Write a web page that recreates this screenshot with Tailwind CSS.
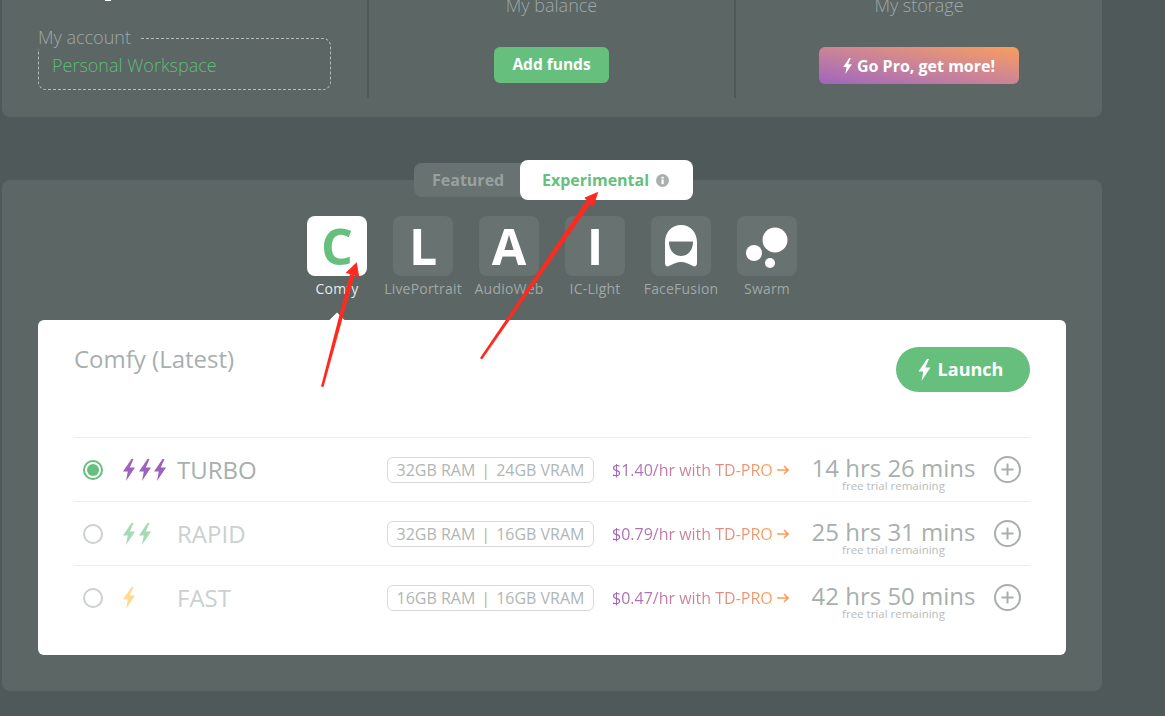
<!DOCTYPE html>
<html>
<head>
<meta charset="utf-8">
<script src="https://cdn.jsdelivr.net/npm/@tailwindcss/browser@4"></script>
</head>
<body class="bg-[#505959]">
<div class="relative w-[1165px] h-[716px] overflow-hidden bg-[#505959] font-['Open_Sans',sans-serif]">

  <!-- Account panel -->
  <section class="ml-[2px] w-[1100px] h-[117px] bg-[#5b6665] rounded-b-lg flex items-start">
    <div class="relative w-[367px] h-[98px] border-r-2 border-[#4f5958]">
      <div class="absolute left-[103px] top-0 w-[6px] h-[1px] bg-white"></div>
      <div class="absolute left-[36px] top-[38px] w-[293px] h-[52px] rounded-lg border border-dashed border-[#b4bbb9] pl-[13px] pt-[3px] flex items-center text-[18px] font-light text-[#5fbc78]">Personal Workspace</div>
      <div class="absolute left-[36px] top-[25px] w-[103px] h-[24px] bg-[#5b6665] text-[18px] leading-[24px] font-light text-[#a0a8a6] whitespace-nowrap">My account</div>
    </div>
    <div class="w-[367px] h-[98px] border-r-2 border-[#4f5958] flex flex-col items-center">
      <div class="mt-[-7px] h-[24px] text-[18px] leading-[24px] font-light text-[#a0a8a6]">My balance</div>
      <button class="mt-[30px] w-[115px] h-[36px] rounded-md bg-[#66bf7c] text-white text-[15.5px] font-bold">Add funds</button>
    </div>
    <div class="flex-1 h-[98px] flex flex-col items-center">
      <div class="mt-[-7px] h-[24px] text-[18px] leading-[24px] font-light text-[#a0a8a6]">My storage</div>
      <button class="mt-[30px] w-[200px] h-[37px] rounded-md bg-linear-to-tr from-[#a064bd] to-[#fb9d58] text-white text-[16px] font-bold flex items-center justify-center gap-[5px]">
        <svg width="9" height="16" viewBox="0 0 12 22" fill="currentColor"><path d="M8.5 0 0 12.5h4.8L3 22l9-13.5H6.8L10.5 0z"/></svg>
        <span>Go Pro, get more!</span>
      </button>
    </div>
  </section>

  <!-- Apps panel -->
  <section class="mt-[63px] ml-[2px] w-[1100px] h-[511px] bg-[#5b6665] rounded-lg">
    <!-- Tabs -->
    <div class="flex items-center ml-[412px] -translate-y-[20px] h-[40px]">
      <div class="w-[108px] h-[34px] rounded-l-lg bg-[#687270] pl-[18px] flex items-center text-[16px] font-bold text-[#99a19f]">Featured</div>
      <div class="w-[173px] h-[40px] rounded-lg bg-white pl-[22px] flex items-center text-[16px] font-bold text-[#66bf7c] -ml-[2px]">
        <span>Experimental</span>
        <svg class="ml-[7px]" width="13" height="13" viewBox="0 0 13 13"><circle cx="6.5" cy="6.5" r="6.5" fill="#a9b0ae"/><rect x="5.5" y="5.5" width="2.2" height="4.6" fill="#fff"/><rect x="5.5" y="2.8" width="2.2" height="1.8" fill="#fff"/></svg>
      </div>
    </div>

    <!-- App icons -->
    <div class="flex ml-[305px] gap-[26px] mt-[-4px]">
      <div class="w-[60px] flex flex-col items-center">
        <div class="w-[60px] h-[60px] rounded-lg bg-white flex items-center justify-center text-[50px] font-bold text-[#66bf7c]">C</div>
        <div class="mt-[3px] text-[14px] leading-[20px] tracking-[0.2px] text-[#e8ebea] whitespace-nowrap">Comfy</div>
      </div>
      <div class="w-[60px] flex flex-col items-center">
        <div class="w-[60px] h-[60px] rounded-lg bg-[#687270] flex items-center justify-center text-[50px] font-bold text-white">L</div>
        <div class="mt-[3px] text-[14px] leading-[20px] tracking-[0.2px] text-[#a0a8a6] whitespace-nowrap">LivePortrait</div>
      </div>
      <div class="w-[60px] flex flex-col items-center">
        <div class="w-[60px] h-[60px] rounded-lg bg-[#687270] flex items-center justify-center text-[50px] font-bold text-white">A</div>
        <div class="mt-[3px] text-[14px] leading-[20px] tracking-[0.2px] text-[#a0a8a6] whitespace-nowrap">AudioWeb</div>
      </div>
      <div class="w-[60px] flex flex-col items-center">
        <div class="w-[60px] h-[60px] rounded-lg bg-[#687270] flex items-center justify-center text-[50px] font-bold text-white">I</div>
        <div class="mt-[3px] text-[14px] leading-[20px] tracking-[0.2px] text-[#a0a8a6] whitespace-nowrap">IC-Light</div>
      </div>
      <div class="w-[60px] flex flex-col items-center">
        <div class="w-[60px] h-[60px] rounded-lg bg-[#687270] flex items-center justify-center">
          <svg width="32" height="42" viewBox="0 0 32 42"><path fill="#fff" d="M0 17C0 7 7 0 16 0s16 7 16 17v21c0 3-2 4-4 3-4-2-8-4-12-4s-8 2-12 4c-2 1-4 0-4-3z"/><path fill="#687270" d="M4 17h24c0 8-5 14-12 14S4 25 4 17z"/><rect x="4" y="16" width="24" height="1" fill="#b9bfbd"/></svg>
        </div>
        <div class="mt-[3px] text-[14px] leading-[20px] tracking-[0.2px] text-[#a0a8a6] whitespace-nowrap">FaceFusion</div>
      </div>
      <div class="w-[60px] flex flex-col items-center">
        <div class="w-[60px] h-[60px] rounded-lg bg-[#687270]">
          <svg width="60" height="60" viewBox="0 0 60 60" fill="#fff"><circle cx="38" cy="24" r="12.5"/><circle cx="17" cy="37" r="8"/><circle cx="33" cy="47" r="5"/></svg>
        </div>
        <div class="mt-[3px] text-[14px] leading-[20px] tracking-[0.2px] text-[#a0a8a6] whitespace-nowrap">Swarm</div>
      </div>
    </div>

    <!-- Card -->
    <div class="relative mt-[21px] ml-[36px] w-[1028px] h-[335px] bg-white rounded-md px-[36px]">
      <div class="absolute left-[293px] top-[-5px] w-[12px] h-[12px] rotate-45 bg-white"></div>
      <div class="flex justify-between items-start h-[117px]">
        <h2 class="mt-[24px] text-[24px] leading-[30px] text-[#a8afad]">Comfy (Latest)</h2>
        <button class="mt-[27px] w-[134px] h-[45px] rounded-full bg-[#66bf7c] text-white text-[18px] font-bold flex items-center justify-center gap-[7px] pr-[5px]">
          <svg width="13" height="22" viewBox="0 0 12 22" fill="currentColor"><path d="M8.5 0 0 12.5h4.8L3 22l9-13.5H6.8L10.5 0z"/></svg>
          <span>Launch</span>
        </button>
      </div>

      <!-- Row: Turbo -->
      <div class="h-[64px] border-t border-[#ebeded] flex items-center pl-[9px]">
        <div class="w-[20px] h-[20px] rounded-full border-2 border-[#66bf7c] flex items-center justify-center"><div class="w-[12px] h-[12px] rounded-full bg-[#66bf7c]"></div></div>
        <div class="ml-[20px] w-[54px] flex gap-[3.5px] text-[#9b63bd]">
          <svg width="12" height="22" viewBox="0 0 12 22" fill="currentColor"><path d="M8.5 0 0 12.5h4.8L3 22l9-13.5H6.8L10.5 0z"/></svg>
          <svg width="12" height="22" viewBox="0 0 12 22" fill="currentColor"><path d="M8.5 0 0 12.5h4.8L3 22l9-13.5H6.8L10.5 0z"/></svg>
          <svg width="12" height="22" viewBox="0 0 12 22" fill="currentColor"><path d="M8.5 0 0 12.5h4.8L3 22l9-13.5H6.8L10.5 0z"/></svg>
        </div>
        <div class="w-[210px] text-[24px] text-[#a8afad]">TURBO</div>
        <div class="w-[207px] h-[26px] rounded-md border border-[#d8dbda] flex items-center justify-center gap-[6px] text-[16px] text-[#b0b6b4] whitespace-nowrap"><span>32GB RAM</span><span>|</span><span>24GB VRAM</span></div>
        <div class="ml-[18px] w-[200px] flex items-center text-[16px]">
          <span class="bg-linear-to-r from-[#a064bd] to-[#fb9d58] bg-clip-text text-transparent whitespace-nowrap">$1.40/hr with TD-PRO</span>
          <svg class="ml-[4px]" width="12" height="10" viewBox="0 0 12 10" fill="none" stroke="#fb9d58" stroke-width="1.6"><path d="M0 5h11M7 1l4 4-4 4"/></svg>
        </div>
        <div class="mt-[8px] w-[163px] flex flex-col items-center text-[#a8afad]">
          <div class="text-[24px] leading-[24px] whitespace-nowrap">14 hrs 26 mins</div>
          <div class="text-[11.5px] leading-[12px] text-[#b8bdbb] whitespace-nowrap">free trial remaining</div>
        </div>
        <svg class="ml-[19px]" width="27" height="27" viewBox="0 0 27 27" fill="none" stroke="#a8afad" stroke-width="2"><circle cx="13.5" cy="13.5" r="12.5"/><path d="M13.5 7.5v12M7.5 13.5h12"/></svg>
      </div>

      <!-- Row: Rapid -->
      <div class="h-[64px] border-t border-[#ebeded] flex items-center pl-[9px]">
        <div class="w-[20px] h-[20px] rounded-full border-2 border-[#ccd0cf]"></div>
        <div class="ml-[20px] w-[54px] flex gap-[3.5px] text-[#a5dab2]">
          <svg width="12" height="22" viewBox="0 0 12 22" fill="currentColor"><path d="M8.5 0 0 12.5h4.8L3 22l9-13.5H6.8L10.5 0z"/></svg>
          <svg width="12" height="22" viewBox="0 0 12 22" fill="currentColor"><path d="M8.5 0 0 12.5h4.8L3 22l9-13.5H6.8L10.5 0z"/></svg>
        </div>
        <div class="w-[210px] text-[24px] text-[#ccd0cf]">RAPID</div>
        <div class="w-[207px] h-[26px] rounded-md border border-[#d8dbda] flex items-center justify-center gap-[6px] text-[16px] text-[#b0b6b4] whitespace-nowrap"><span>32GB RAM</span><span>|</span><span>16GB VRAM</span></div>
        <div class="ml-[18px] w-[200px] flex items-center text-[16px]">
          <span class="bg-linear-to-r from-[#a064bd] to-[#fb9d58] bg-clip-text text-transparent whitespace-nowrap">$0.79/hr with TD-PRO</span>
          <svg class="ml-[4px]" width="12" height="10" viewBox="0 0 12 10" fill="none" stroke="#fb9d58" stroke-width="1.6"><path d="M0 5h11M7 1l4 4-4 4"/></svg>
        </div>
        <div class="mt-[8px] w-[163px] flex flex-col items-center text-[#a8afad]">
          <div class="text-[24px] leading-[24px] whitespace-nowrap">25 hrs 31 mins</div>
          <div class="text-[11.5px] leading-[12px] text-[#b8bdbb] whitespace-nowrap">free trial remaining</div>
        </div>
        <svg class="ml-[19px]" width="27" height="27" viewBox="0 0 27 27" fill="none" stroke="#a8afad" stroke-width="2"><circle cx="13.5" cy="13.5" r="12.5"/><path d="M13.5 7.5v12M7.5 13.5h12"/></svg>
      </div>

      <!-- Row: Fast -->
      <div class="h-[64px] border-t border-[#ebeded] flex items-center pl-[9px]">
        <div class="w-[20px] h-[20px] rounded-full border-2 border-[#ccd0cf]"></div>
        <div class="ml-[20px] w-[54px] flex gap-[3.5px] text-[#fddc8f]">
          <svg width="12" height="22" viewBox="0 0 12 22" fill="currentColor"><path d="M8.5 0 0 12.5h4.8L3 22l9-13.5H6.8L10.5 0z"/></svg>
        </div>
        <div class="w-[210px] text-[24px] text-[#ccd0cf]">FAST</div>
        <div class="w-[207px] h-[26px] rounded-md border border-[#d8dbda] flex items-center justify-center gap-[6px] text-[16px] text-[#b0b6b4] whitespace-nowrap"><span>16GB RAM</span><span>|</span><span>16GB VRAM</span></div>
        <div class="ml-[18px] w-[200px] flex items-center text-[16px]">
          <span class="bg-linear-to-r from-[#a064bd] to-[#fb9d58] bg-clip-text text-transparent whitespace-nowrap">$0.47/hr with TD-PRO</span>
          <svg class="ml-[4px]" width="12" height="10" viewBox="0 0 12 10" fill="none" stroke="#fb9d58" stroke-width="1.6"><path d="M0 5h11M7 1l4 4-4 4"/></svg>
        </div>
        <div class="mt-[8px] w-[163px] flex flex-col items-center text-[#a8afad]">
          <div class="text-[24px] leading-[24px] whitespace-nowrap">42 hrs 50 mins</div>
          <div class="text-[11.5px] leading-[12px] text-[#b8bdbb] whitespace-nowrap">free trial remaining</div>
        </div>
        <svg class="ml-[19px]" width="27" height="27" viewBox="0 0 27 27" fill="none" stroke="#a8afad" stroke-width="2"><circle cx="13.5" cy="13.5" r="12.5"/><path d="M13.5 7.5v12M7.5 13.5h12"/></svg>
      </div>
    </div>
  </section>

  <!-- Red annotation arrows -->
  <svg class="absolute left-0 top-0 pointer-events-none" width="1165" height="716" viewBox="0 0 1165 716" fill="#ff2a1f">
    <path d="M321 386.5 350 274l4.5 1.3L323.5 387z"/>
    <path d="M356.7 262.3 345.7 272.7 359.3 277.3z"/>
    <path d="M480 358 586.5 200.5l4.2 3L482 359.6z"/>
    <path d="M598.3 191.7 584.3 197.7 593.3 207.3z"/>
  </svg>
</div>
</body>
</html>
